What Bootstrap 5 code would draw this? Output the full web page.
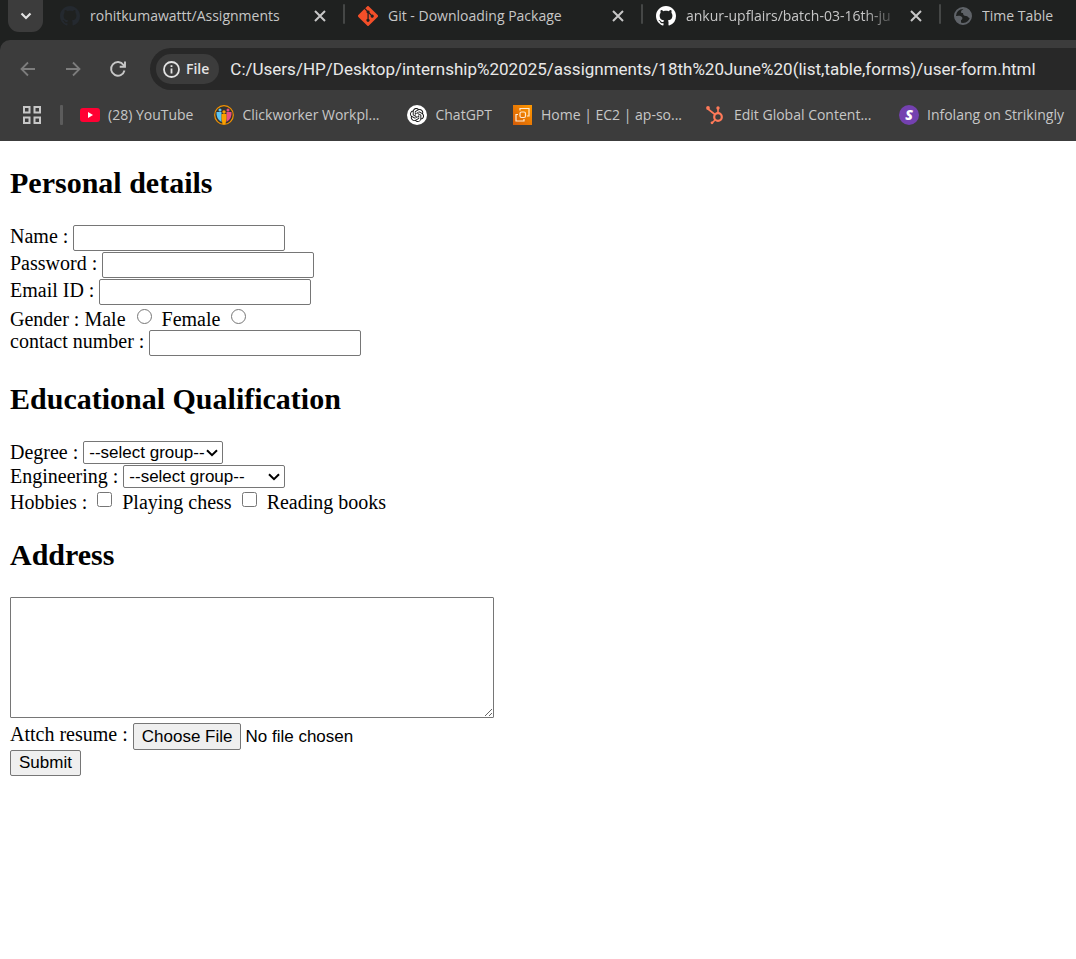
<!DOCTYPE html>
<html lang="en">
<head>
<meta charset="utf-8">
<meta name="viewport" content="width=device-width, initial-scale=1">
<title>User form</title>
<link href="https://cdn.jsdelivr.net/npm/bootstrap@5.3.0/dist/css/bootstrap.min.css" rel="stylesheet">
<style>
  body { background: #fff; color: #000; }

  /* Browser frame */
  .chrome { font-family: "Open Sans", "Noto Sans", sans-serif; font-size: 14px; line-height: 20px; color: #c7c7c7; background: #1f2120; }
  .chrome svg { display: block; flex: none; }
  .chrome button { background: none; border: 0; padding: 0; color: inherit; }
  .tabstrip { height: 40px; }
  .chrome .tab-search { width: 35px; height: 32px; margin: 0 3px 0 8px; border-radius: 0 0 11px 11px; background: #3c3c3c; color: #e3e3e3; flex: none; }
  .browser-tab { width: 298px; height: 32px; padding: 0 18px 0 14px; flex: none; position: relative; gap: 10px; }
  .browser-tab::after { content: ""; position: absolute; right: -1px; top: 4px; width: 2px; height: 20px; border-radius: 1px; background: #454746; }
  .browser-tab a, .bookmark { color: inherit; text-decoration: none; white-space: nowrap; }
  .browser-tab a { overflow: hidden; flex: 1; }
  .fade-end { -webkit-mask-image: linear-gradient(to left, transparent, #000 36px); mask-image: linear-gradient(to left, transparent, #000 36px); }
  .toolbar { background: #3c3c3c; border-top-left-radius: 10px; padding-top: 8px; }
  .nav-buttons { width: 150px; padding-left: 18px; gap: 25px; }
  .dim { color: #7d7d7d !important; }
  .address { background: #282828; height: 42px; border-radius: 21px 0 0 21px; padding-left: 6px; gap: 11px; }
  .chrome .chip { background: #3c3c3c; height: 30px; border-radius: 15px; padding: 0 10px 0 7px; color: #e3e3e3; font-weight: 600; gap: 6px; flex: none; }
  .address input { background: none; border: 0; padding: 0; color: #e8e8e8; font-family: Roboto, sans-serif; font-size: 17px; line-height: 24px; flex: 1; min-width: 0; outline: 0; }
  .bookmarks { height: 51px; padding: 0 0 2px 22px; gap: 21px; }
  .bookmarks .rule { width: 3px; height: 20px; background: #5c5c5c; border-radius: 1px; flex: none; margin: 0 -4px 0 -3px; }
  .bookmark { gap: 8px; flex: none; }
  .bookmark.wide { width: 172px; }

  /* Form page */
  .page { font-family: "Liberation Serif", "Times New Roman", serif; font-size: 20px; line-height: 23px; padding: 0 10px; }
  .page h2 { font-size: 30px; line-height: 34px; font-weight: 700; margin: 25px 0; }
  .line { display: flex; align-items: flex-start; gap: 5px; height: 27px; }
  .line.tight { height: 24px; }
  .page input, .page select, .page textarea, .page button { font-family: "Liberation Sans", Arial, sans-serif; font-size: 17px; line-height: 20px; color: #000; }
  .field { width: 212px; height: 26px; padding: 1px 2px; border: 1px solid #767676; border-radius: 2px; background: #fff; }
  .pick { height: 23px; border: 1px solid #767676; border-radius: 2px; padding: 0 5px; appearance: none; -webkit-appearance: none;
    background: #fff url("data:image/svg+xml,%3Csvg xmlns='http://www.w3.org/2000/svg' width='12' height='8' viewBox='0 0 12 8'%3E%3Cpath d='M1 1.2l5 5 5-5' fill='none' stroke='%23000' stroke-width='2'/%3E%3C/svg%3E") no-repeat right 4px center; }
  .pick.degree { width: 140px; }
  .pick.branch { width: 162px; }
  .tick { width: 15px; height: 15px; margin: 1px 5px 0; flex: none; }
  .tick[type=radio] { margin-left: 6px; }
  .options { padding-top: 2px; }
  .address-box { display: block; width: 484px; max-width: 100%; height: 121px; border: 1px solid #767676; border-radius: 1px; margin-bottom: 5px; }
  .resume::file-selector-button, .submit { border: 1px solid #767676; border-radius: 2px; background: #efefef; color: #000; padding: 2px 8px; }
  .resume { height: 27px; padding: 0; }
  .resume::file-selector-button { height: 27px; margin: 0 4px 0 0; }
  .submit { height: 26px; display: block; }
</style>
</head>
<body>
<header class="chrome overflow-hidden">
  <div class="tabstrip d-flex">
    <button class="tab-search d-flex align-items-center justify-content-center" aria-label="Search tabs">
      <svg width="12" height="8" viewBox="0 0 12 8"><path d="M1.500 1.500l4.500 4.500 4.500-4.500" fill="none" stroke="currentColor" stroke-width="2.200"/></svg>
    </button>
    <div class="browser-tab d-flex align-items-center">
      <svg width="20" height="20" viewBox="0 0 16 16" fill="#24292f"><path d="M8 0C3.580 0 0 3.580 0 8c0 3.540 2.290 6.530 5.470 7.590.4.070.550-.170.550-.380 0-.190-.010-.820-.010-1.490-2.010.370-2.530-.490-2.690-.940-.090-.230-.480-.940-.820-1.130-.280-.150-.680-.520-.010-.530.630-.010 1.080.580 1.230.820.720 1.210 1.870.870 2.330.660.070-.520.280-.870.510-1.070-1.780-.2-3.640-.890-3.640-3.950 0-.870.310-1.590.820-2.150-.080-.2-.360-1.020.080-2.120 0 0 .670-.210 2.200.820.640-.180 1.320-.270 2-.270s1.360.090 2 .270c1.530-1.040 2.200-.820 2.200-.820.440 1.100.160 1.920.080 2.120.510.560.820 1.270.820 2.150 0 3.070-1.870 3.750-3.650 3.950.290.250.540.730.540 1.480 0 1.070-.010 1.930-.010 2.200 0 .210.150.460.550.380A8.010 8.010 0 0 0 16 8c0-4.420-3.580-8-8-8"/></svg>
      <a href="#">rohitkumawattt/Assignments</a>
      <button aria-label="Close tab"><svg width="12" height="12" viewBox="0 0 12 12"><path d="M1 1l10 10M11 1L1 11" stroke="currentColor" stroke-width="2"/></svg></button>
    </div>
    <div class="browser-tab d-flex align-items-center">
      <svg width="20" height="20" viewBox="0 0 16 16" fill="#f34f29"><path d="M15.698 7.287 8.712.302a1.030 1.030 0 0 0-1.457 0l-1.450 1.450 1.840 1.840a1.223 1.223 0 0 1 1.550 1.560l1.773 1.774a1.224 1.224 0 0 1 1.267 2.025 1.226 1.226 0 0 1-2.002-1.334L8.580 5.963v4.353a1.226 1.226 0 1 1-1.008-.036V5.887a1.226 1.226 0 0 1-.666-1.608L5.093 2.465l-4.790 4.790a1.030 1.030 0 0 0 0 1.457l6.986 6.986a1.030 1.030 0 0 0 1.457 0l6.953-6.953a1.030 1.030 0 0 0 0-1.457"/></svg>
      <a href="#">Git - Downloading Package</a>
      <button aria-label="Close tab"><svg width="12" height="12" viewBox="0 0 12 12"><path d="M1 1l10 10M11 1L1 11" stroke="currentColor" stroke-width="2"/></svg></button>
    </div>
    <div class="browser-tab d-flex align-items-center">
      <svg width="20" height="20" viewBox="0 0 16 16" fill="#fff"><path d="M8 0C3.580 0 0 3.580 0 8c0 3.540 2.290 6.530 5.470 7.590.4.070.550-.170.550-.380 0-.190-.010-.820-.010-1.490-2.010.370-2.530-.490-2.690-.940-.090-.230-.480-.940-.820-1.130-.280-.150-.680-.520-.010-.530.630-.010 1.080.580 1.230.820.720 1.210 1.870.870 2.330.660.070-.520.280-.870.510-1.070-1.780-.2-3.640-.890-3.640-3.950 0-.870.310-1.590.820-2.150-.080-.2-.360-1.020.080-2.120 0 0 .670-.210 2.200.820.640-.180 1.320-.270 2-.270s1.360.090 2 .270c1.530-1.040 2.200-.820 2.200-.820.440 1.100.160 1.920.080 2.120.510.560.820 1.270.820 2.150 0 3.070-1.870 3.750-3.650 3.950.290.250.540.730.540 1.480 0 1.070-.010 1.930-.010 2.200 0 .210.150.460.550.380A8.010 8.010 0 0 0 16 8c0-4.420-3.580-8-8-8"/></svg>
      <a href="#" class="fade-end">ankur-upflairs/batch-03-16th-ju</a>
      <button aria-label="Close tab"><svg width="12" height="12" viewBox="0 0 12 12"><path d="M1 1l10 10M11 1L1 11" stroke="currentColor" stroke-width="2"/></svg></button>
    </div>
    <div class="browser-tab d-flex align-items-center">
      <svg width="18" height="18" viewBox="0 0 18 18"><circle cx="9" cy="9" r="8" fill="#1f2120" stroke="#5f6368" stroke-width="2"/><path d="M10 1c-1 2-3 2-3 4 0 1 1 1 2 1 0 2 1 3 3 3s2 2 4 2l1-3c0-4-3-7-7-7zM1 9c2 0 5-1 7 1 1 1 0 3-1 3v3.500C3 16 1 13 1 9z" fill="#5f6368"/></svg>
      <a href="#">Time Table</a>
    </div>
  </div>

  <div class="toolbar">
    <div class="d-flex">
      <div class="nav-buttons d-flex align-items-center flex-shrink-0">
        <button class="dim" aria-label="Back"><svg width="20" height="20" viewBox="0 0 20 20"><path d="M17 10H3.500M10 3.500L3.500 10l6.500 6.500" fill="none" stroke="currentColor" stroke-width="1.800"/></svg></button>
        <button class="dim" aria-label="Forward"><svg width="20" height="20" viewBox="0 0 20 20"><path d="M3 10h13.500M10 3.500l6.500 6.500-6.500 6.500" fill="none" stroke="currentColor" stroke-width="1.800"/></svg></button>
        <button aria-label="Reload"><svg width="20" height="20" viewBox="0 0 20 20"><path d="M16.500 11.500A6.800 6.800 0 1 1 15.500 6L17 7.600M17 2.500v5.300h-5.300" fill="none" stroke="currentColor" stroke-width="1.900"/></svg></button>
      </div>
      <div class="address d-flex align-items-center flex-grow-1">
        <button class="chip d-flex align-items-center"><svg width="17" height="17" viewBox="0 0 17 17"><circle cx="8.500" cy="8.500" r="7.500" fill="none" stroke="currentColor" stroke-width="1.800"/><path d="M8.500 7.500v5M8.500 4.300v1.800" stroke="currentColor" stroke-width="1.800"/></svg>File</button>
        <input type="text" aria-label="Address" value="C:/Users/HP/Desktop/internship%202025/assignments/18th%20June%20(list,table,forms)/user-form.html">
      </div>
    </div>
    <nav class="bookmarks d-flex align-items-center" aria-label="Bookmarks">
      <button aria-label="Apps"><svg width="20" height="20" viewBox="0 0 20 20" fill="none" stroke="currentColor" stroke-width="2"><path d="M2 2h5.500v5.500H2zM12.500 2H18v5.500h-5.500zM2 12.500h5.500V18H2zM12.500 12.500H18V18h-5.500z"/></svg></button>
      <span class="rule"></span>
      <a class="bookmark d-flex align-items-center" href="#"><svg width="20" height="20" viewBox="0 0 20 20"><rect y="3" width="20" height="14" rx="3" fill="#ff0033"/><path d="M8 7l5 3-5 3z" fill="#fff"/></svg>(28) YouTube</a>
      <a class="bookmark wide d-flex align-items-center" href="#"><svg width="20" height="20" viewBox="0 0 20 20"><circle cx="10" cy="10" r="9.300" fill="#333" stroke="#f39200" stroke-width="1.200"/><circle cx="6" cy="5" r="1.500" fill="#5bc5f2"/><path d="M2.500 7h5v10Q2 14 2.500 7z" fill="#5bc5f2"/><circle cx="14" cy="5" r="1.500" fill="#e94e80"/><path d="M12.500 7h5q.5 7-5 10z" fill="#e94e80"/><circle cx="10" cy="7" r="1.700" fill="#f9a000"/><path d="M7.500 9h5v5l-1 5h-3l-1-5z" fill="#f9a000"/></svg>Clickworker Workpl...</a>
      <a class="bookmark d-flex align-items-center" href="#"><svg width="20" height="20" viewBox="0 0 40 40"><circle cx="20" cy="20" r="20" fill="#fff"/><path transform="translate(6 6) scale(1.170)" fill="#111" d="M22.282 9.821a5.985 5.985 0 0 0-.516-4.911 6.046 6.046 0 0 0-6.510-2.900A6.065 6.065 0 0 0 4.981 4.182a5.985 5.985 0 0 0-3.998 2.900 6.046 6.046 0 0 0 .743 7.097 5.980 5.980 0 0 0 .511 4.911 6.051 6.051 0 0 0 6.515 2.900A5.985 5.985 0 0 0 13.260 24a6.056 6.056 0 0 0 5.772-4.206 5.989 5.989 0 0 0 3.998-2.900 6.056 6.056 0 0 0-.748-7.073zm-9.022 12.608a4.476 4.476 0 0 1-2.876-1.041l.142-.080 4.778-2.758a.795.795 0 0 0 .393-.681v-6.737l2.020 1.169a.071.071 0 0 1 .038.052v5.583a4.504 4.504 0 0 1-4.495 4.493zm-9.661-4.125a4.471 4.471 0 0 1-.535-3.014l.142.085 4.783 2.758a.771.771 0 0 0 .781 0l5.843-3.369v2.332a.080.080 0 0 1-.033.062L9.740 19.950a4.499 4.499 0 0 1-6.141-1.646zM2.341 7.896a4.485 4.485 0 0 1 2.366-1.973V11.600a.766.766 0 0 0 .388.677l5.814 3.354-2.020 1.169a.076.076 0 0 1-.071 0l-4.830-2.787A4.504 4.504 0 0 1 2.341 7.872zm16.596 3.856L13.104 8.364 15.119 7.200a.076.076 0 0 1 .071 0l4.830 2.791a4.494 4.494 0 0 1-.677 8.104v-5.677a.790.790 0 0 0-.407-.667zm2.011-3.023l-.142-.085-4.774-2.782a.776.776 0 0 0-.785 0L9.409 9.230V6.897a.066.066 0 0 1 .028-.062l4.830-2.787a4.499 4.499 0 0 1 6.680 4.660zM8.307 12.863l-2.020-1.164a.080.080 0 0 1-.038-.057V6.074a4.499 4.499 0 0 1 7.376-3.454l-.142.081L8.704 5.459a.795.795 0 0 0-.393.681zm1.097-2.365l2.602-1.500 2.607 1.500v2.999l-2.597 1.500-2.607-1.500z"/></svg>ChatGPT</a>
      <a class="bookmark wide d-flex align-items-center" href="#"><svg width="20" height="20" viewBox="0 0 20 20"><defs><linearGradient id="ec2" x1="0" y1="1" x2="1" y2="0"><stop stop-color="#d45b07"/><stop offset="1" stop-color="#ff9900"/></linearGradient></defs><path d="M0 0h19v20H0z" fill="url(#ec2)"/><g fill="none" stroke="#ffe9d0" stroke-width="1.200"><rect x="7" y="7" width="5.500" height="5.500" rx="1.500"/><path d="M7 5.500V3.500h9V11h-2M5 9.500H3V16h8v-2"/></g></svg>Home | EC2 | ap-so...</a>
      <a class="bookmark wide d-flex align-items-center" href="#"><svg width="20" height="20" viewBox="0 0 20 20" fill="none" stroke="#ff7a59"><circle cx="12" cy="12" r="3.800" stroke-width="2.200"/><path d="M12 8V4M9 9.500L2 4M9 15l-3 3" stroke-width="1.600"/><g fill="#ff7a59" stroke="none"><circle cx="12" cy="3" r="1.700"/><circle cx="2" cy="3" r="1.900"/><circle cx="6" cy="17.800" r="1.400"/></g></svg>Edit Global Content...</a>
      <a class="bookmark d-flex align-items-center" href="#"><svg width="20" height="20" viewBox="0 0 20 20"><circle cx="10" cy="10" r="10" fill="#7441b0"/><text x="10" y="15" text-anchor="middle" font-size="14" font-weight="800" font-style="italic" fill="#fff">S</text></svg>Infolang on Strikingly</a>
    </nav>
  </div>
</header>

<main class="page">
  <form>
    <h2>Personal details</h2>
    <div class="line"><label for="name">Name :</label><input class="field" id="name" type="text"></div>
    <div class="line"><label for="password">Password :</label><input class="field" id="password" type="password"></div>
    <div class="line"><label for="email">Email ID :</label><input class="field" id="email" type="email"></div>
    <div class="line tight options"><span>Gender :</span><label for="male">Male</label><input class="tick" id="male" name="gender" type="radio"><label for="female">Female</label><input class="tick" id="female" name="gender" type="radio"></div>
    <div class="line"><label for="contact">contact number :</label><input class="field" id="contact" type="tel"></div>

    <h2>Educational Qualification</h2>
    <div class="line tight"><label for="degree">Degree :</label><select class="pick degree" id="degree"><option>--select group--</option></select></div>
    <div class="line tight"><label for="branch">Engineering :</label><select class="pick branch" id="branch"><option>--select group--</option></select></div>
    <div class="line tight options"><span>Hobbies :</span><input class="tick" id="chess" type="checkbox"><label for="chess">Playing chess</label><input class="tick" id="books" type="checkbox"><label for="books">Reading books</label></div>

    <h2>Address</h2>
    <textarea class="address-box" aria-label="Address"></textarea>
    <div class="line"><label for="resume">Attch resume :</label><input class="resume" id="resume" type="file"></div>
    <button class="submit" type="submit">Submit</button>
  </form>
</main>
<script src="https://cdn.jsdelivr.net/npm/bootstrap@5.3.0/dist/js/bootstrap.bundle.min.js"></script>
</body>
</html>
